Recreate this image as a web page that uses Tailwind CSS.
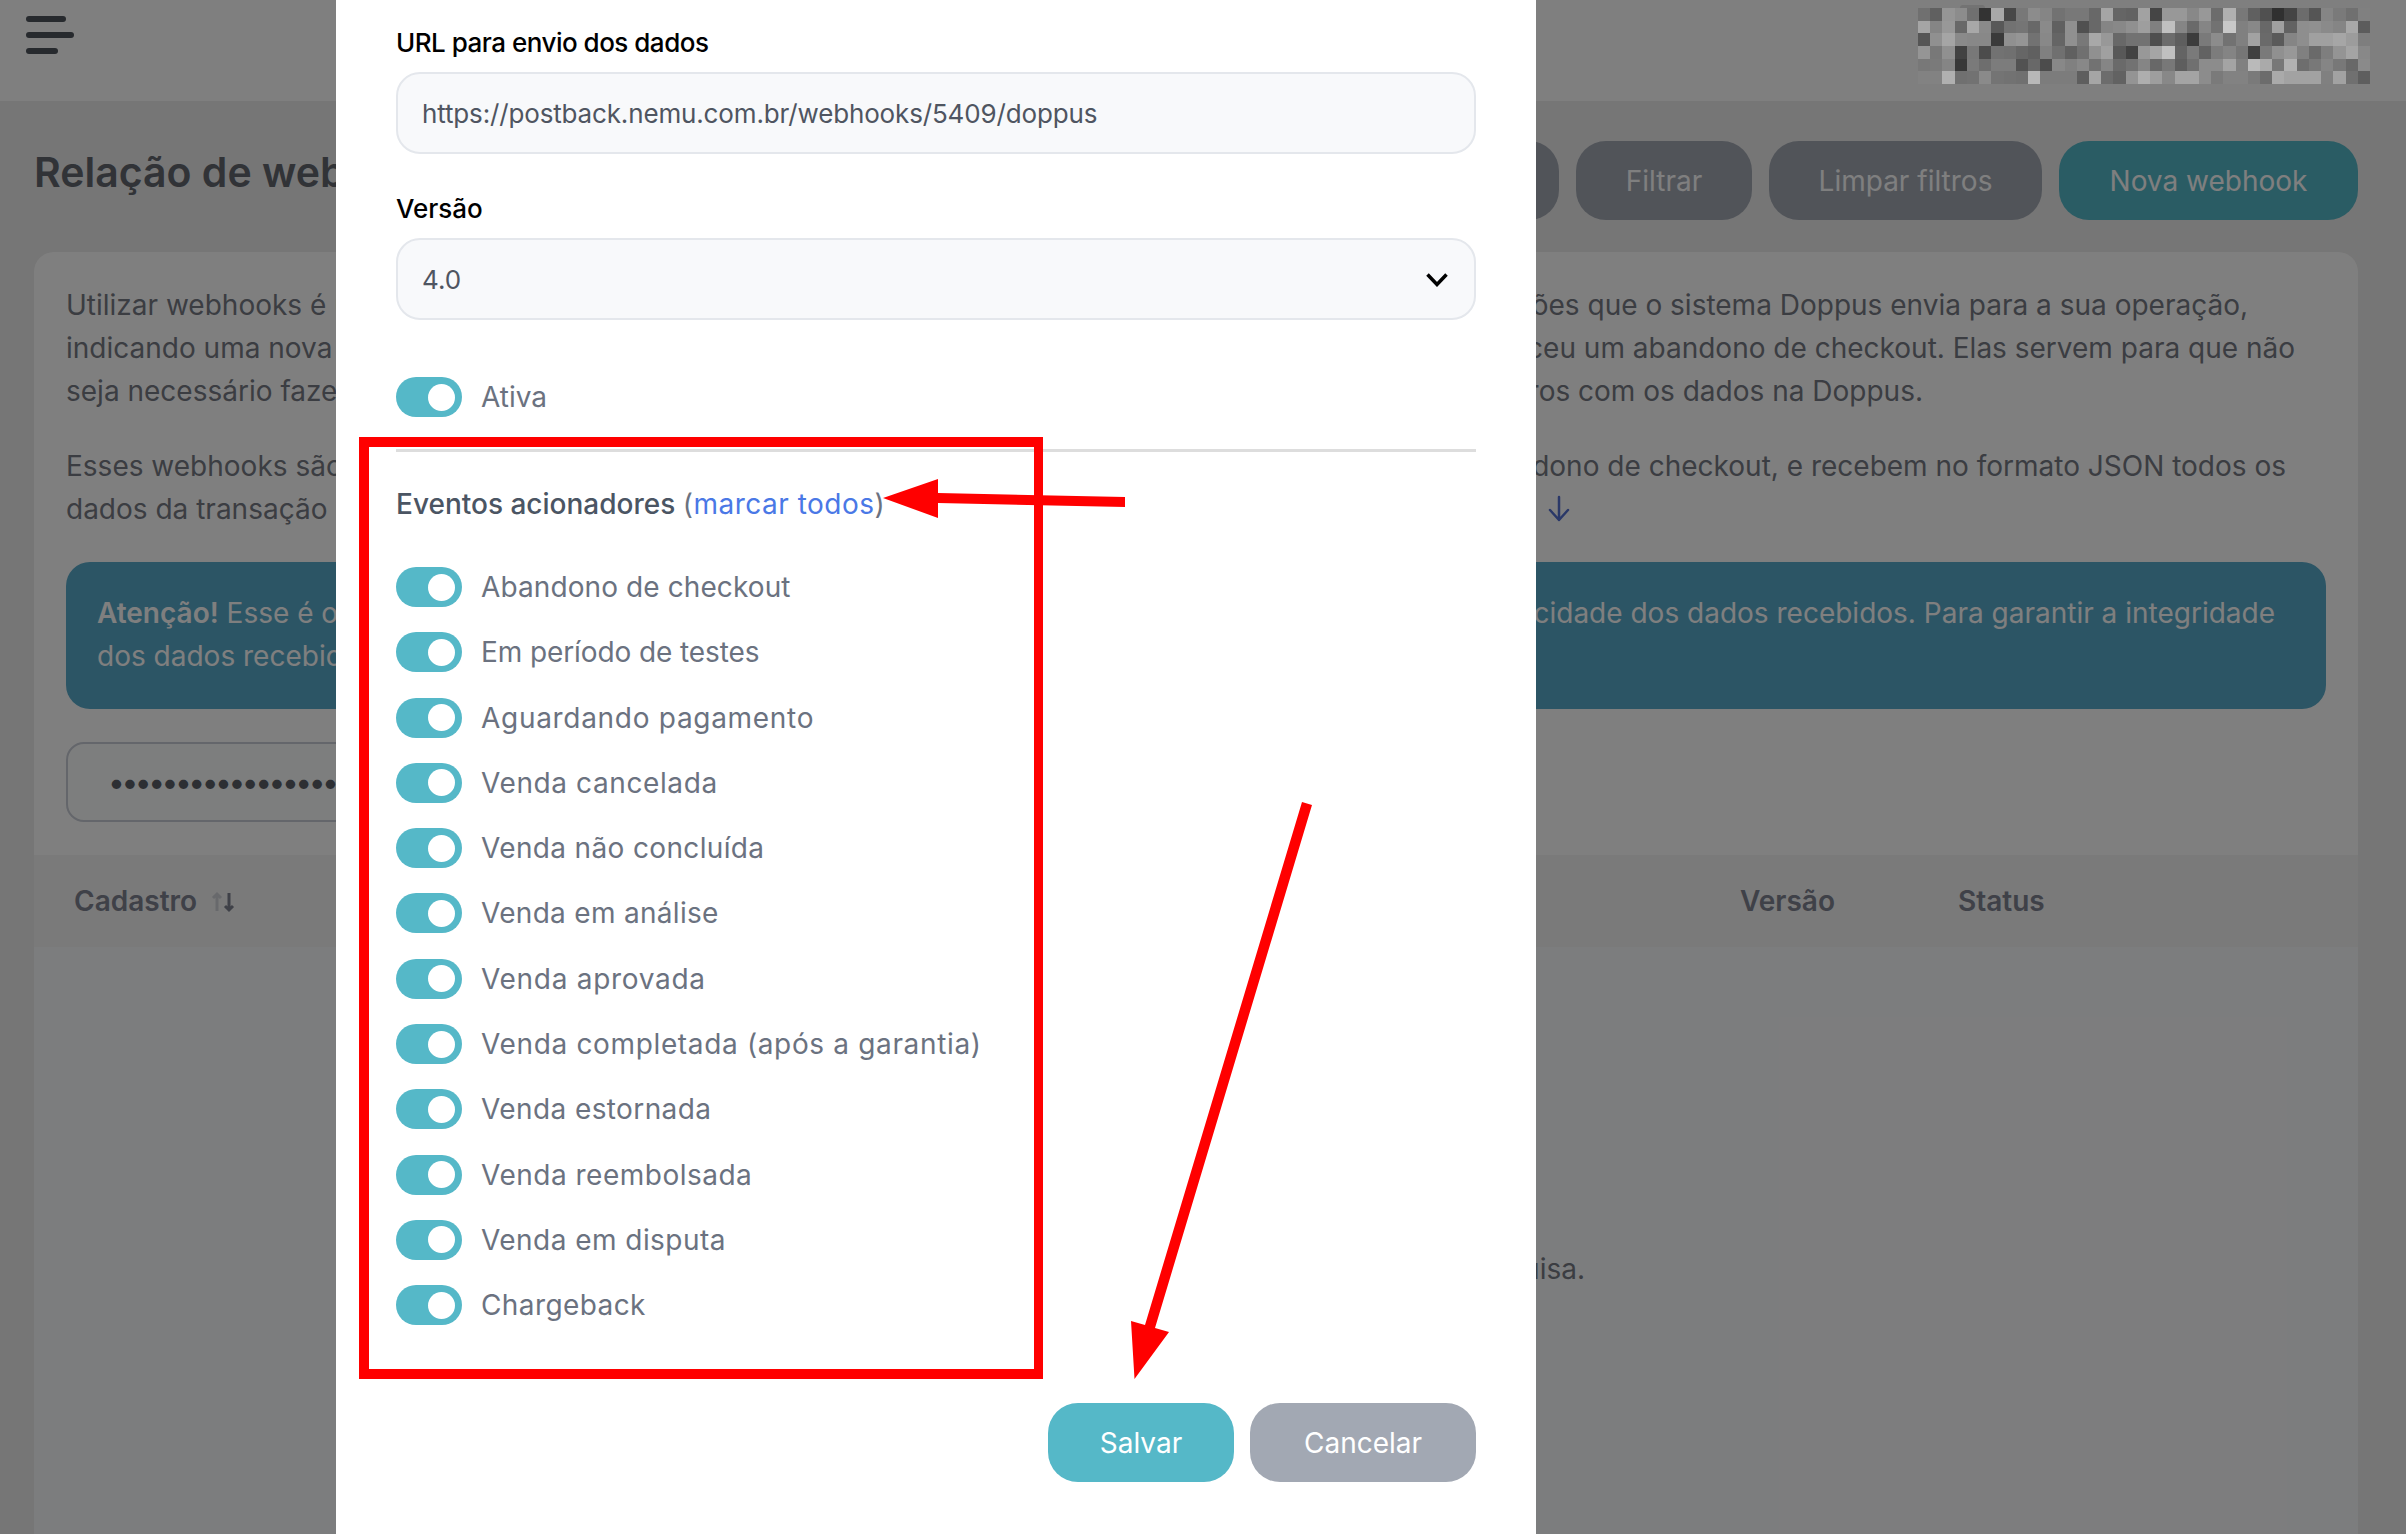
<!DOCTYPE html>
<html lang="pt-BR">
<head>
  <meta charset="UTF-8" />
  <title>Webhooks</title>
  <script src="https://cdn.jsdelivr.net/npm/@tailwindcss/browser@4"></script>
</head>
<body class="relative w-[2406px] h-[1534px] overflow-hidden bg-[#ececec] font-['Inter',sans-serif]">

  <!-- pagina atras do modal -->
  <header class="h-[101px] bg-white flex items-start justify-between pl-[26px] pr-[36px]">
    <div class="flex flex-col gap-[10px] pt-[16px]">
      <span class="block w-[40px] h-[6px] rounded-sm bg-[#4e545c]"></span>
      <span class="block w-[48px] h-[6px] rounded-sm bg-[#4e545c]"></span>
      <span class="block w-[32px] h-[6px] rounded-sm bg-[#4e545c]"></span>
    </div>
    <div id="mosaic" class="relative z-20 mt-[8px] grid grid-cols-[repeat(37,1fr)] grid-rows-6 w-[452px] h-[76px]">
      <span class="absolute left-[42px] -top-[3px] w-[25px] h-[3px] rounded-t-full bg-[#737373]"></span>
    </div>
  </header>

  <main class="pl-[34px] pr-[48px]">
    <div class="flex items-start justify-between pt-[40px] pb-[32px]">
      <h1 class="whitespace-nowrap text-[41px] leading-[62px] font-semibold text-[#62666e]">Relação de webhooks</h1>
      <div class="flex gap-[17px] text-[28px] text-white">
        <button class="w-[200px] h-[79px] rounded-[30px] bg-[#a2a8b3]">Pesquisar</button>
        <button class="w-[176px] h-[79px] rounded-[30px] bg-[#a2a8b3]">Filtrar</button>
        <button class="w-[273px] h-[79px] rounded-[30px] bg-[#a2a8b3]">Limpar filtros</button>
        <button class="w-[299px] h-[79px] rounded-[30px] bg-[#55b8c8]">Nova webhook</button>
      </div>
    </div>

    <section class="h-[1300px] rounded-[20px] bg-white overflow-hidden">
      <div class="h-[603px] px-[32px] pt-[32px] text-[28px] leading-[43px] text-[#777a84]">
        <p class="flex justify-between w-[2182px]"><span>Utilizar webhooks é uma</span><span>informações que o sistema Doppus envia para a sua operação,</span></p>
        <p class="flex justify-between w-[2229px]"><span>indicando uma nova venda</span><span>aconteceu um abandono de checkout. Elas servem para que não</span></p>
        <p class="flex justify-between w-[1857px]"><span>seja necessário fazer</span><span>registros com os dados na Doppus.</span></p>
        <p class="flex justify-between w-[2220px] mt-[32px]"><span>Esses webhooks são</span><span>abandono de checkout, e recebem no formato JSON todos os</span></p>
        <p class="flex justify-between w-[1505px]">
          <span>dados da transação</span>
          <svg class="mt-[6px]" width="24" height="30" viewBox="0 0 24 30" fill="none" stroke="#5470d0" stroke-width="2.5" stroke-linecap="round" stroke-linejoin="round"><path d="M12 3v23M3 16l9 10 9-10"/></svg>
        </p>

        <div class="h-[147px] mt-[31px] px-[31px] py-[30px] rounded-[24px] bg-[#58aaca] text-white">
          <p class="flex justify-between w-[2178px]"><span><b class="font-semibold">Atenção!</b> Esse é o</span><span>autenticidade dos dados recebidos. Para garantir a integridade</span></p>
          <p>dos dados recebidos</p>
        </div>

        <input type="password" value="xxxxxxxxxxxxxxxxxxxxxxxxxxxx" readonly
          class="block w-[900px] h-[80px] mt-[33px] px-[40px] rounded-[18px] border-2 border-[#c8cdd6] bg-[#fbfcfc] text-[30px] text-[#5a5e66] tracking-[-3.5px]" />
      </div>

      <div class="h-[92px] bg-[#f4f4f4] relative text-[28px] leading-[92px] font-semibold text-[#7e8290]">
        <span class="absolute left-[40px]">Cadastro</span>
        <svg class="absolute left-[176px] top-[36px]" width="26" height="22" viewBox="0 0 26 22" fill="none" stroke-width="3"><path stroke="#d0d3d8" d="M7 20V3M3 7l4-4 4 4"/><path stroke="#7e8290" d="M19 2v17M15 15l4 4 4-4"/></svg>
        <span class="absolute left-[1706px]">Versão</span>
        <span class="absolute left-[1924px]">Status</span>
      </div>
      <div class="h-[605px] bg-[#f9fafc] pt-[301px] text-[28px] leading-[43px] text-[#777a84]">
        <p class="w-[1551px] text-right">Nenhum registro encontrado para a sua pesquisa.</p>
      </div>
    </section>
  </main>

  <!-- fundo escuro do modal -->
  <div class="absolute inset-0 z-10 bg-black/50"></div>

  <!-- modal -->
  <div class="absolute z-20 top-0 left-[336px] w-[1200px] h-[1534px] bg-white px-[60px] pt-[23px]">
    <label class="block text-[26px] leading-[40px] font-medium text-black mb-[9px] tracking-[-0.5px]">URL para envio dos dados</label>
    <input type="text" readonly value="https://postback.nemu.com.br/webhooks/5409/doppus"
      class="block w-[1080px] h-[82px] px-[24px] rounded-[24px] border-2 border-[#e4e7ec] bg-[#f8f9fb] text-[26px] text-[#4f5561] tracking-[-0.15px]" />

    <label class="block mt-[35px] text-[26px] leading-[40px] font-medium text-black mb-[9px]">Versão</label>
    <div class="relative w-[1080px] h-[82px]">
      <select class="block w-full h-full appearance-none px-[24px] rounded-[24px] border-2 border-[#e4e7ec] bg-[#f8f9fb] text-[26px] text-[#4f5561]">
        <option>4.0</option>
      </select>
      <svg class="absolute right-[28px] top-[35px]" width="22" height="14" viewBox="0 0 22 14" fill="none" stroke="#000" stroke-width="3.5"><path d="M1.5 1.5 11 11.5l9.5-10"/></svg>
    </div>

    <div class="flex items-center gap-[19px] h-[40px] mt-[57px] text-[28px] text-[#6b7280]">
      <span class="flex items-center justify-end w-[66px] h-[40px] pr-[7px] rounded-full bg-[#55b8c8]"><span class="block w-[27px] h-[27px] rounded-full bg-white"></span></span>
      Ativa
    </div>

    <hr class="mt-[32px] w-[1080px] border-t-[3px] border-[#dddddd]" />

    <p class="mt-[32px] text-[28px] leading-[40px] font-medium text-[#4b5563]">Eventos acionadores <span class="font-normal text-[#6b7280] tracking-[0.5px]">(<a href="#" class="text-[#4a78e6]">marcar todos</a>)</span></p>

    <div class="mt-[43px] grid gap-y-[25.3px] text-[28px] text-[#6b7280]">
      <div class="flex items-center gap-[19px] h-[40px] tracking-[0.1px]"><span class="flex items-center justify-end w-[66px] h-[40px] pr-[7px] rounded-full bg-[#55b8c8]"><span class="block w-[27px] h-[27px] rounded-full bg-white"></span></span>Abandono de checkout</div>
      <div class="flex items-center gap-[19px] h-[40px] tracking-[-0.1px]"><span class="flex items-center justify-end w-[66px] h-[40px] pr-[7px] rounded-full bg-[#55b8c8]"><span class="block w-[27px] h-[27px] rounded-full bg-white"></span></span>Em período de testes</div>
      <div class="flex items-center gap-[19px] h-[40px] tracking-[0.7px]"><span class="flex items-center justify-end w-[66px] h-[40px] pr-[7px] rounded-full bg-[#55b8c8]"><span class="block w-[27px] h-[27px] rounded-full bg-white"></span></span>Aguardando pagamento</div>
      <div class="flex items-center gap-[19px] h-[40px] tracking-[0.6px]"><span class="flex items-center justify-end w-[66px] h-[40px] pr-[7px] rounded-full bg-[#55b8c8]"><span class="block w-[27px] h-[27px] rounded-full bg-white"></span></span>Venda cancelada</div>
      <div class="flex items-center gap-[19px] h-[40px] tracking-[0.35px]"><span class="flex items-center justify-end w-[66px] h-[40px] pr-[7px] rounded-full bg-[#55b8c8]"><span class="block w-[27px] h-[27px] rounded-full bg-white"></span></span>Venda não concluída</div>
      <div class="flex items-center gap-[19px] h-[40px] tracking-[0.3px]"><span class="flex items-center justify-end w-[66px] h-[40px] pr-[7px] rounded-full bg-[#55b8c8]"><span class="block w-[27px] h-[27px] rounded-full bg-white"></span></span>Venda em análise</div>
      <div class="flex items-center gap-[19px] h-[40px] tracking-[0.7px]"><span class="flex items-center justify-end w-[66px] h-[40px] pr-[7px] rounded-full bg-[#55b8c8]"><span class="block w-[27px] h-[27px] rounded-full bg-white"></span></span>Venda aprovada</div>
      <div class="flex items-center gap-[19px] h-[40px] tracking-[0.65px]"><span class="flex items-center justify-end w-[66px] h-[40px] pr-[7px] rounded-full bg-[#55b8c8]"><span class="block w-[27px] h-[27px] rounded-full bg-white"></span></span>Venda completada (após a garantia)</div>
      <div class="flex items-center gap-[19px] h-[40px] tracking-[0.4px]"><span class="flex items-center justify-end w-[66px] h-[40px] pr-[7px] rounded-full bg-[#55b8c8]"><span class="block w-[27px] h-[27px] rounded-full bg-white"></span></span>Venda estornada</div>
      <div class="flex items-center gap-[19px] h-[40px] tracking-[0.5px]"><span class="flex items-center justify-end w-[66px] h-[40px] pr-[7px] rounded-full bg-[#55b8c8]"><span class="block w-[27px] h-[27px] rounded-full bg-white"></span></span>Venda reembolsada</div>
      <div class="flex items-center gap-[19px] h-[40px] tracking-[0.45px]"><span class="flex items-center justify-end w-[66px] h-[40px] pr-[7px] rounded-full bg-[#55b8c8]"><span class="block w-[27px] h-[27px] rounded-full bg-white"></span></span>Venda em disputa</div>
      <div class="flex items-center gap-[19px] h-[40px] tracking-[0.4px]"><span class="flex items-center justify-end w-[66px] h-[40px] pr-[7px] rounded-full bg-[#55b8c8]"><span class="block w-[27px] h-[27px] rounded-full bg-white"></span></span>Chargeback</div>
    </div>

    <div class="mt-[78px] flex justify-end gap-[16px] w-[1080px] text-[28px] text-white">
      <button class="w-[186px] h-[79px] rounded-[30px] bg-[#55b8c8]">Salvar</button>
      <button class="w-[226px] h-[79px] rounded-[30px] bg-[#a2a8b3]">Cancelar</button>
    </div>
  </div>

  <!-- anotacoes em vermelho por cima do print -->
  <svg class="absolute inset-0 z-30" width="2406" height="1534" viewBox="0 0 2406 1534" fill="#ff0000">
    <path fill-rule="evenodd" d="M359 437H1043V1379H359ZM369 447V1369H1034V447Z"/>
    <path d="M883 498 938 479V493L1125 497V507L938 503V518Z"/>
    <path d="M1134.5 1379 1131 1321 1145 1325 1302 802 1312 805 1155 1328 1169 1332Z"/>
  </svg>

  <script>
    // mosaico que esconde os dados do usuario
    const rows = [
      '70 60 95 8c 70 33 a8 48 78 8c 85 72 78 78 68 a5 65 62 a2 45 98 98 88 98 6c b0 78 60 50 30 44 6c 55 85 7a 70 80',
      'a5 85 98 68 a8 8a 58 72 75 68 8a 60 90 50 68 85 88 90 9e 80 c0 85 6a 85 72 c8 80 88 68 a0 62 8e 90 8a 85 a8 5c',
      '55 90 a5 8a 88 88 3a 90 95 72 88 65 90 78 a8 98 68 72 72 4e 6c 5e 3c 7a 8c 72 80 a2 6a 5a 85 8e a0 a0 a6 9c 7e',
      '95 78 90 42 78 4c 72 70 66 60 80 70 60 70 90 a0 58 42 98 a5 c0 64 7a 62 7c 84 76 40 7a 90 98 80 6a 7e 94 a4 88',
      '78 7a 85 38 7a 6e 7c 7c 52 68 4c 88 80 88 72 85 6a 72 85 68 78 5e 70 8c 8c a4 80 ba aa 78 b2 6e 78 85 78 68 8a',
      '82 82 b0 70 72 8a 74 72 70 b8 7c 7c 7c 5e a5 6c 62 94 ae 9e 88 a4 a4 8c 7a 82 82 7a 6c aa a2 a2 a2 80 a2 70 5e'
    ]
    const mosaic = document.getElementById('mosaic')
    rows.forEach(row => row.split(' ').forEach(v => {
      const cell = document.createElement('div')
      cell.style.backgroundColor = '#' + v + v + v
      mosaic.appendChild(cell)
    }))
  </script>
</body>
</html>
